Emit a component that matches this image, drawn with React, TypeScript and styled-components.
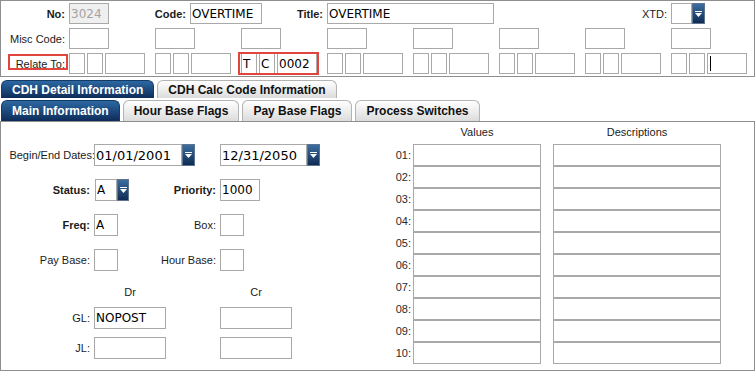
import React from 'react';
import styled, { createGlobalStyle } from 'styled-components';

const GlobalStyle = createGlobalStyle`
  body {
    margin: 0;
    background: #fff;
    font-family: "Liberation Sans", Arial, sans-serif;
  }
`;

const Page = styled.div`
  width: 755px;
  display: flex;
  flex-direction: column;
`;

const Header = styled.div`
  box-sizing: border-box;
  height: 77px;
  border: 1px solid #8e8e8e;
  padding: 2px 0;
  display: flex;
  flex-direction: column;
  gap: 4px;
`;

const HeaderRow = styled.div`
  display: flex;
  align-items: center;
  height: 21px;
`;

const Label = styled.span<{ $w?: number; $bold?: boolean }>`
  box-sizing: border-box;
  flex: none;
  width: ${p => (p.$w ? `${p.$w}px` : 'auto')};
  padding-right: 4px;
  text-align: right;
  font-size: 11px;
  font-weight: ${p => (p.$bold ? 700 : 400)};
  color: #1b1b1b;
  white-space: nowrap;
`;

const RelateLabel = styled(Label)`
  position: relative;

  &::after {
    content: '';
    position: absolute;
    left: 7px;
    right: 1px;
    top: -4px;
    bottom: 0;
    border: 2px solid #e2443e;
  }
`;

const Field = styled.div<{ $w: number; $h?: number; $disabled?: boolean; $size?: number }>`
  box-sizing: border-box;
  flex: none;
  width: ${p => p.$w}px;
  height: ${p => p.$h ?? 21}px;
  border: 1px solid #a9a9a9;
  background: ${p => (p.$disabled ? '#efefef' : '#fff')};
  color: ${p => (p.$disabled ? '#a3a3a3' : '#000')};
  font-family: "DejaVu Sans", Verdana, sans-serif;
  font-size: ${p => p.$size ?? 12}px;
  padding-left: 1px;
  display: flex;
  align-items: center;
  white-space: nowrap;
  overflow: hidden;
`;

const Caret = styled.span`
  width: 1px;
  height: 15px;
  margin-left: 1px;
  background: #000;
`;

const BoxStrip = styled.div`
  display: flex;
  gap: 46px;
`;

const GroupStrip = styled.div`
  display: flex;
  gap: 10px;
`;

const RelateGroup = styled.div<{ $flag?: boolean }>`
  display: flex;
  gap: 2px;
  position: relative;

  &::after {
    content: '';
    display: ${p => (p.$flag ? 'block' : 'none')};
    position: absolute;
    left: -3px;
    right: -2px;
    top: -1px;
    bottom: -1px;
    border: 2px solid #e2443e;
  }
`;

const Select = styled.div<{ $ml?: number }>`
  display: flex;
  flex: none;
  margin-left: ${p => p.$ml ?? 0}px;
`;

const DropButton = styled.span<{ $w?: number; $h?: number }>`
  box-sizing: border-box;
  flex: none;
  width: ${p => p.$w ?? 13}px;
  height: ${p => p.$h ?? 21}px;
  background: linear-gradient(#3b6e9f, #0f2c53);
  border: 1px solid #5d7390;
  display: flex;
  align-items: center;
  justify-content: center;
`;

const TabRow = styled.div<{ $mt: number; $h: number }>`
  display: flex;
  align-items: flex-end;
  gap: 3px;
  height: ${p => p.$h}px;
  margin-top: ${p => p.$mt}px;
  padding-left: 1px;
`;

const Tab = styled.div<{ $active?: boolean }>`
  box-sizing: border-box;
  height: 100%;
  padding: 0 10px;
  display: flex;
  align-items: center;
  border-radius: 6px 6px 0 0;
  border: 1px solid ${p => (p.$active ? '#143a66' : '#b3b3b3')};
  border-bottom: none;
  background: ${p =>
    p.$active ? 'linear-gradient(#2d68a2, #0d2c59)' : 'linear-gradient(#ffffff, #dcdcdc)'};
  color: ${p => (p.$active ? '#fff' : '#111')};
  font-size: 12px;
  font-weight: 700;
  white-space: nowrap;
`;

const Panel = styled.div`
  box-sizing: border-box;
  height: 250px;
  border: 1px solid #8e8e8e;
  display: grid;
  grid-template-columns: 380px 1fr;
`;

const LeftForm = styled.div`
  padding-top: 22px;
`;

const FormGrid = styled.div`
  display: grid;
  grid-template-columns: 89px 70px 48px auto;
  grid-auto-rows: 22px;
  column-gap: 4px;
  row-gap: 13px;
  align-items: center;
`;

const LedgerGrid = styled.div`
  display: grid;
  grid-template-columns: 89px 72px 46px 72px;
  grid-template-rows: 13px 22px 22px;
  column-gap: 4px;
  row-gap: 8px;
  margin-top: 15px;
  align-items: center;
`;

const FormLabel = styled(Label)`
  padding-right: 0;
  justify-self: end;
`;

const DatesLabel = styled(FormLabel)`
  margin-right: -5px;
`;

const Span2 = styled.div`
  grid-column: span 2;
  display: flex;
`;

const ColHead = styled.div<{ $col: number }>`
  grid-column: ${p => p.$col};
  text-align: center;
  font-size: 11px;
  line-height: 13px;
  color: #1b1b1b;
`;

const ValuesBlock = styled.div`
  padding-top: 3px;
  display: flex;
  flex-direction: column;
`;

const ValuesHead = styled.div`
  display: flex;
  height: 14px;
  margin-bottom: 5px;
  font-size: 11px;
  line-height: 14px;
  color: #1b1b1b;
`;

const HeadCell = styled.div<{ $w: number; $ml: number }>`
  width: ${p => p.$w}px;
  margin-left: ${p => p.$ml}px;
  text-align: center;
`;

const ValueRow = styled.div`
  display: flex;
  align-items: center;
  height: 22px;
`;

const RowNum = styled.span`
  width: 30px;
  text-align: right;
  font-size: 11px;
  color: #2a2a2a;
`;

const Cell = styled(Field)<{ $ml: number }>`
  margin-left: ${p => p.$ml}px;
`;

const Arrow = () => (
  <svg width="7" height="6" viewBox="0 0 7 6">
    <rect x="0" y="0" width="7" height="1" fill="#fff" />
    <polygon points="0,2 7,2 3.5,6" fill="#fff" />
  </svg>
);

const relate = [
  ['', '', ''],
  ['', '', ''],
  ['T', 'C', '0002'],
  ['', '', ''],
  ['', '', ''],
  ['', '', ''],
  ['', '', ''],
  ['', '', ''],
];

const rowNums = ['01', '02', '03', '04', '05', '06', '07', '08', '09', '10'];

export default function App() {
  return (
    <Page>
      <GlobalStyle />
      <Header>
        <HeaderRow>
          <Label $w={68} $bold>No:</Label>
          <Field $w={40} $disabled>3024</Field>
          <Label $w={81} $bold>Code:</Label>
          <Field $w={72}>OVERTIME</Field>
          <Label $w={65} $bold>Title:</Label>
          <Field $w={167}>OVERTIME</Field>
          <Label $w={177}>XTD:</Label>
          <Select>
            <Field $w={21} />
            <DropButton>
              <Arrow />
            </DropButton>
          </Select>
        </HeaderRow>
        <HeaderRow>
          <Label $w={68}>Misc Code:</Label>
          <BoxStrip>
            {relate.map((_, i) => (
              <Field key={i} $w={40} />
            ))}
          </BoxStrip>
        </HeaderRow>
        <HeaderRow>
          <RelateLabel $w={68}>Relate To:</RelateLabel>
          <GroupStrip>
            {relate.map((g, i) => (
              <RelateGroup key={i} $flag={i === 2}>
                <Field $w={16}>{g[0]}</Field>
                <Field $w={16}>{g[1]}</Field>
                <Field $w={40}>
                  {g[2]}
                  {i === relate.length - 1 && <Caret />}
                </Field>
              </RelateGroup>
            ))}
          </GroupStrip>
        </HeaderRow>
      </Header>

      <TabRow $mt={3} $h={18}>
        <Tab $active>CDH Detail Information</Tab>
        <Tab>CDH Calc Code Information</Tab>
      </TabRow>
      <TabRow $mt={2} $h={21}>
        <Tab $active>Main Information</Tab>
        <Tab>Hour Base Flags</Tab>
        <Tab>Pay Base Flags</Tab>
        <Tab>Process Switches</Tab>
      </TabRow>

      <Panel>
        <LeftForm>
          <FormGrid>
            <DatesLabel>Begin/End Dates:</DatesLabel>
            <Span2>
              <Select>
                <Field $w={88} $h={22} $size={13}>01/01/2001</Field>
                <DropButton $h={22}>
                  <Arrow />
                </DropButton>
              </Select>
            </Span2>
            <Select>
              <Field $w={87} $h={22} $size={13}>12/31/2050</Field>
              <DropButton $h={22}>
                <Arrow />
              </DropButton>
            </Select>

            <FormLabel $bold>Status:</FormLabel>
            <Select $ml={1}>
              <Field $w={22} $h={22}>A</Field>
              <DropButton $w={12} $h={22}>
                <Arrow />
              </DropButton>
            </Select>
            <FormLabel $bold>Priority:</FormLabel>
            <Field $w={40} $h={22}>1000</Field>

            <FormLabel $bold>Freq:</FormLabel>
            <Field $w={24} $h={22}>A</Field>
            <FormLabel>Box:</FormLabel>
            <Field $w={24} $h={22} />

            <FormLabel>Pay Base:</FormLabel>
            <Field $w={24} $h={22} />
            <FormLabel>Hour Base:</FormLabel>
            <Field $w={24} $h={22} />
          </FormGrid>

          <LedgerGrid>
            <ColHead $col={2}>Dr</ColHead>
            <ColHead $col={4}>Cr</ColHead>

            <FormLabel>GL:</FormLabel>
            <Field $w={72} $h={22}>NOPOST</Field>
            <span />
            <Field $w={72} $h={22} />

            <FormLabel>JL:</FormLabel>
            <Field $w={72} $h={22} />
            <span />
            <Field $w={72} $h={22} />
          </LedgerGrid>
        </LeftForm>

        <ValuesBlock>
          <ValuesHead>
            <HeadCell $w={128} $ml={32}>Values</HeadCell>
            <HeadCell $w={168} $ml={12}>Descriptions</HeadCell>
          </ValuesHead>
          {rowNums.map(n => (
            <ValueRow key={n}>
              <RowNum>{n}:</RowNum>
              <Cell $w={128} $h={22} $ml={2} />
              <Cell $w={168} $h={22} $ml={12} />
            </ValueRow>
          ))}
        </ValuesBlock>
      </Panel>
    </Page>
  );
}
